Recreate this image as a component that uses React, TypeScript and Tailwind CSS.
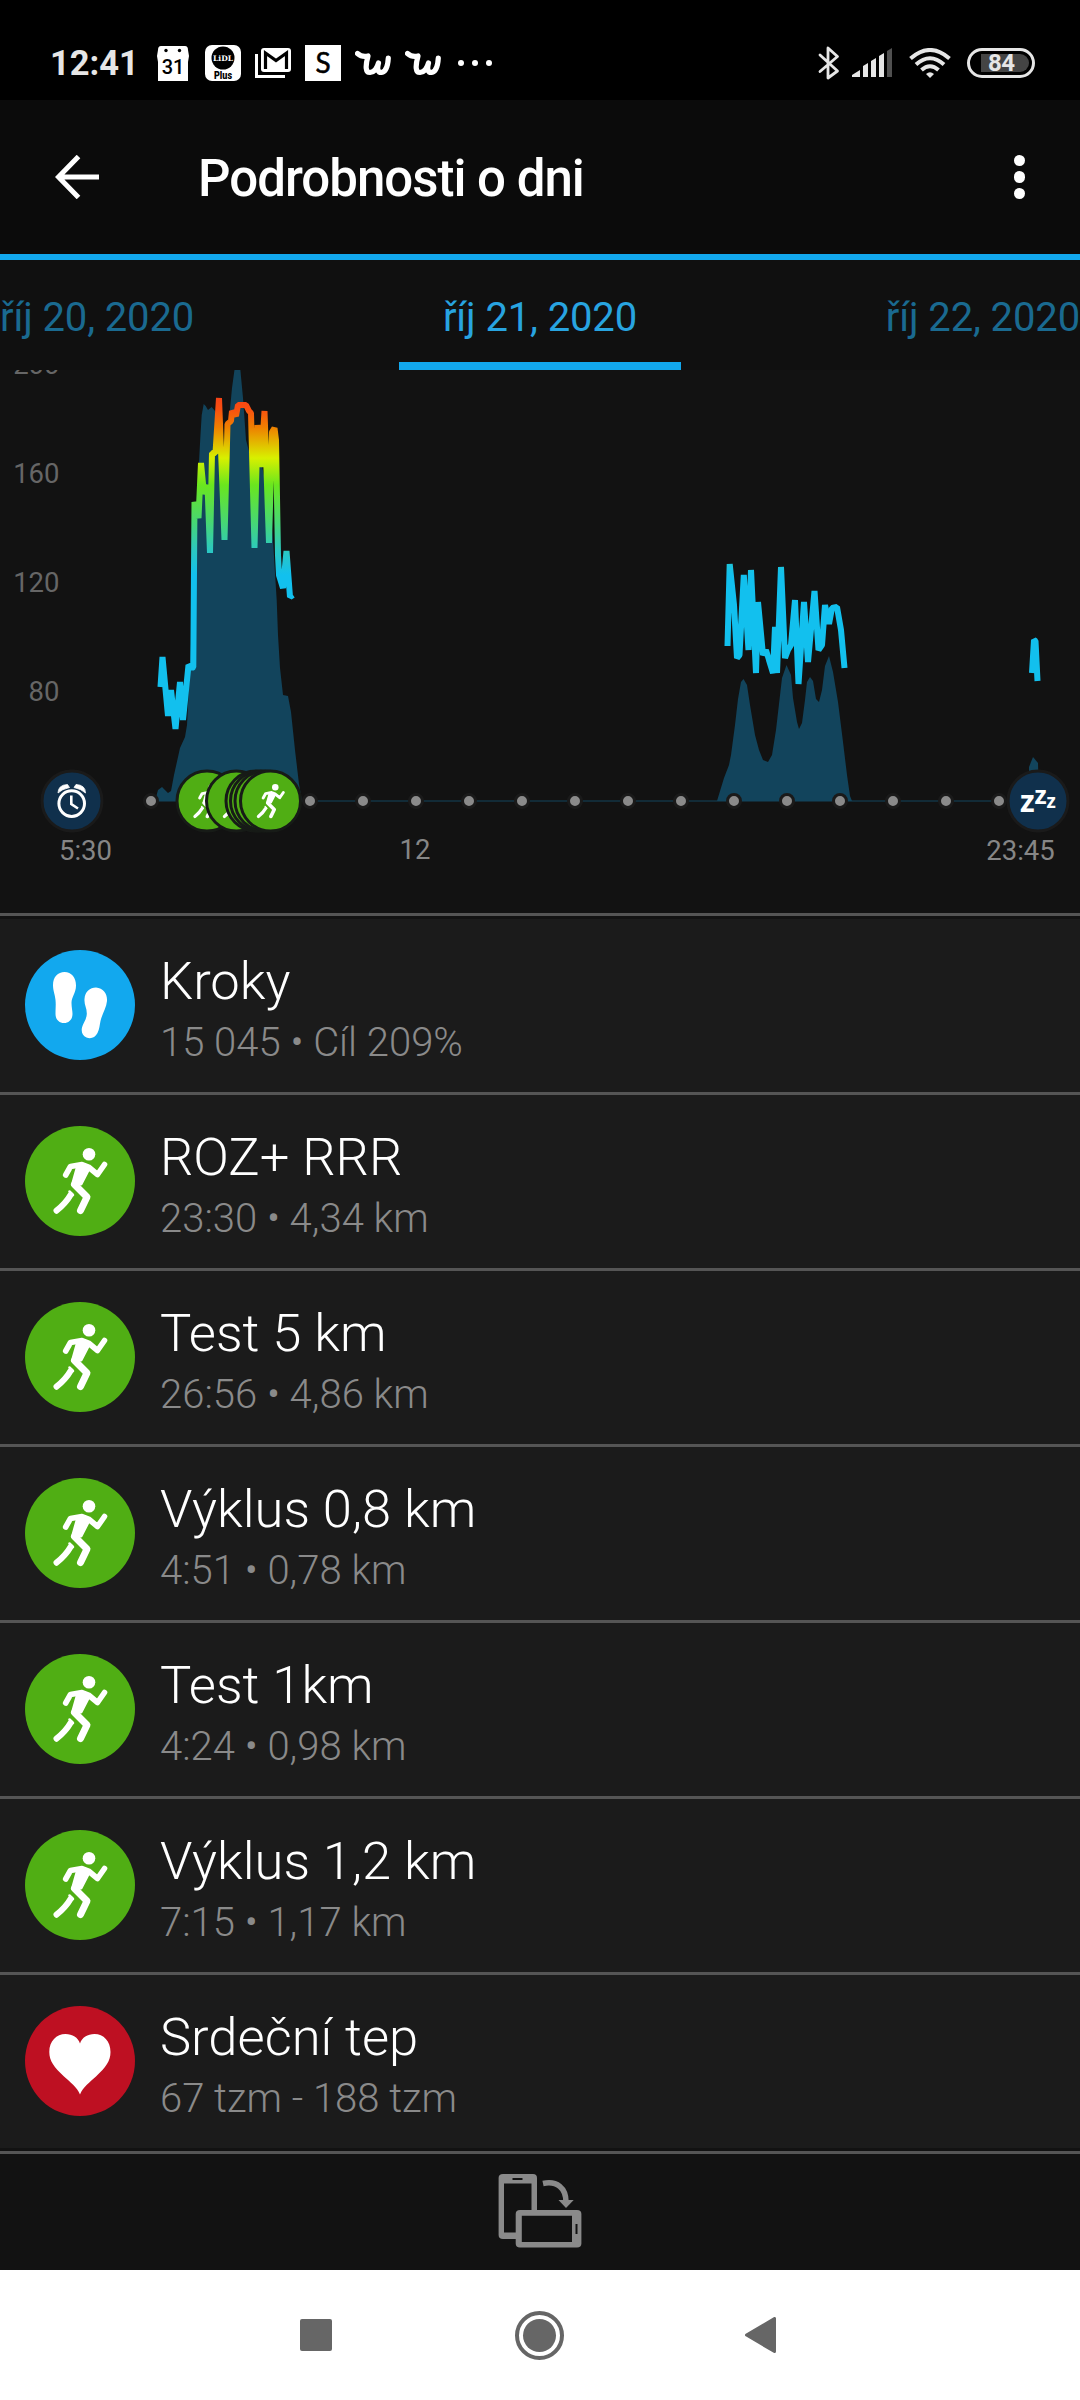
const ROWS = [
  { icon: "steps", title: "Kroky", detail: "15 045 • Cíl 209%" },
  { icon: "run", title: "ROZ+ RRR", detail: "23:30 • 4,34 km" },
  { icon: "run", title: "Test 5 km", detail: "26:56 • 4,86 km" },
  { icon: "run", title: "Výklus 0,8 km", detail: "4:51 • 0,78 km" },
  { icon: "run", title: "Test 1km", detail: "4:24 • 0,98 km" },
  { icon: "run", title: "Výklus 1,2 km", detail: "7:15 • 1,17 km" },
  { icon: "heart", title: "Srdeční tep", detail: "67 tzm - 188 tzm" },
];

// ------------------------------------------------------------
// Chart data (svg units = px)
// ------------------------------------------------------------
const HOUR_DOTS = Array.from({ length: 17 }, (_, i) => 151 + i * 53);
const RUN_MARKERS = [207, 236.5, 256, 260.5, 265, 270.5];
const Y_LABELS = [
  { value: 200, y: 374 },
  { value: 160, y: 482.5 },
  { value: 120, y: 591.5 },
  { value: 80, y: 700.5 },
];

const HEART_RATE = [
  "M160.500 687L162.500 657 168 716 171 690 175.500 729 180 682 183 720 188.500 665 192 668 193.300 667 194.500 502 198.500 518 201 463 204 494 207.500 485 210 553 212 453 215.500 453 219 398 224.500 540 227.500 424 231 421 232 411 236 416 238 405 246 405 249 411 251 413 254.500 548 257.500 425 261 467 264.500 411 269 543 272 432 274.500 428 276 440 278 555 279 575 283 588 286.500 551 290 597 293 595",
  "M727.500 646L729.700 564 734 605 737 658 739.500 655 743.800 575 748.500 650 751 570 756 673 758 602 763 655 766 650 769 660 773 673 775 627 777 673 781 567 785 658 788 650 791 645 795 600 798.500 684 804 602 808 662 814.500 591 818.500 650 822 645 825 605 829 624 832 608 837 607 841 630 844.500 668",
  "M1032 673L1034 640 1035.500 641 1037.500 681",
];

const ACTIVITY = [
  "M155 801L158 790 162 787 168 793 171 791 174 775 180 748 185 737 187 725 190 665 193 600 199 462 200.300 438 201.700 415 203.700 404 205.700 406 208 410 211.700 407 215 411 219 445 224 455 229 420 232 388 235 366 240 366 243 398 246 440 250 455 262 466 269 500 273 540 275 573 276.700 600 278 635 280 668 283 695 288 696 291 712 295 750 299 784 302 801Z",
  "M717 801L724 778 729 765 731 755 735 725 738 699 741 682 743.500 679 747 685 750 705 755 735 759 750 763 760 768 762 772 755 776 730 779 704 782 678 786.500 665 791 675 793 698 797 722 799 729 802 723 805 700 807 682 810 677 813 681 816 699 819 702 822 690 825 666 829 656 833 672 838 702 843 742 847 775 850 796 852 801Z",
  "M1029 801L1029 767 1033 757 1038 763 1039 801Z",
];

// 110x110 space, shared by list rows and the chart markers
function Runner() {
  return (
    <g fill="none" stroke="#fff" strokeLinecap="round" strokeLinejoin="round">
      <circle cx="64" cy="28.300" r="6.300" fill="#fff" stroke="none" />
      <path d="M40.700 49L45.500 40.500 57 38.500 63.500 41 72.500 48.500 79.500 38.500" strokeWidth="5.600" />
      <path d="M53 39L64 42.500 56 58 47.500 58.500Z" fill="#fff" strokeWidth="3" />
      <path d="M49.500 58.500L62 71 55.500 84.500" strokeWidth="7" />
      <path d="M45.500 69Q41 77 31.500 84.700" strokeWidth="6" />
      <path d="M44.500 65.500L48 69" strokeWidth="2.500" />
    </g>
  );
}

function RowIcon({ kind }: { kind: string }) {
  const color = kind === "steps" ? "#12a8ee" : kind === "run" ? "#50ae14" : "#be1022";
  return (
    <svg width="110" height="110" viewBox="0 0 110 110" className="mt-[31px] shrink-0">
      <circle cx="55" cy="55" r="55" fill={color} />
      {kind === "steps" && (
        <g fill="#fff">
          <path d="M39.500 22C46.500 22 51 27.500 51 35.500C51 43 46.500 47 46.500 53C46.500 57 47.500 61 47.500 64C47.500 69.500 44 73 39 73C34 73 30.500 69.500 30.500 64C30.500 58 31 55 30.500 50C30 44 28 41 28 35C28 27 33 22 39.500 22Z" />
          <path d="M71 37.500C78.500 38 82.500 44 82 51C81.500 58 77 64 75.500 71C74.500 75.500 74.500 79 72.500 83C70 88 65.500 89 61.500 87.500C57.500 86 56 82 57 77.500C58 73 61.500 70 61.800 64C62 58 59 55 59.500 49C60 41.500 65 37.500 71 37.500Z" />
        </g>
      )}
      {kind === "run" && <Runner />}
      {kind === "heart" && (
        <path d="M55 88.500C52 81 45 76 39 70.500C29 61 24.300 55 24.300 46C24.300 35 31.500 28 40.500 28C47.500 28 53 31.500 55 37.500C57 31.500 62.500 28 69.500 28C78.500 28 85.500 35 85.500 46C85.500 55 81 61 71 70.500C65 76 58 81 55 88.500Z" fill="#fff" />
      )}
    </svg>
  );
}

function WishIcon() {
  return (
    <svg width="36" height="26" viewBox="0 0 36 26" fill="none" stroke="#fff" strokeWidth="5.200" strokeLinecap="round" strokeLinejoin="round">
      <path d="M2.500 3.500Q7 7.500 13 6Q8.500 22.500 15 22.500Q21 22 23.500 13Q21 22.500 26.500 22.500Q32.500 21.500 33.300 8" />
    </svg>
  );
}

function StatusBar() {
  return (
    <div className="flex h-[100px] items-center bg-black pt-[26px]">
      <span className="ml-[50px] w-[107px] text-[34.500px]/[34px] font-bold text-[#e6e6e6]">12:41</span>
      <svg width="32" height="35" viewBox="0 0 32 35">
        <path d="M4 0H28Q31 0 31 4L32 10 31 16V35H1V16L0 10 1 4Q1 0 4 0Z" fill="#fff" />
        <circle cx="9" cy="4.500" r="1.700" />
        <circle cx="22.500" cy="4.500" r="1.700" />
        <text x="16" y="27.500" textAnchor="middle" fontSize="20" fontWeight="500">31</text>
      </svg>
      <svg width="36" height="36" viewBox="0 0 36 36" className="ml-4">
        <rect width="36" height="36" rx="7" fill="#fff" />
        <circle cx="18" cy="13" r="11.500" />
        <text x="18" y="15.500" textAnchor="middle" fontSize="7.500" fontWeight="700" fill="#fff" fontFamily="DejaVu Serif" textLength="20" lengthAdjust="spacingAndGlyphs">LiDL</text>
        <text x="18" y="33.500" textAnchor="middle" fontSize="10.500" fontWeight="900" textLength="18" lengthAdjust="spacingAndGlyphs">Plus</text>
      </svg>
      <svg width="36" height="30" viewBox="0 0 36 30" className="ml-[14px]">
        <path d="M1.500 6V28.500H30" fill="none" stroke="#fff" strokeWidth="3" />
        <rect x="6" width="30" height="24" rx="3" fill="#fff" />
        <path d="M10.500 21V5L21 12.500 31.500 5V21" fill="none" stroke="#000" strokeWidth="3.200" />
      </svg>
      <svg width="36" height="36" viewBox="0 0 36 36" className="ml-[14px]">
        <rect width="36" height="36" fill="#fff" />
        <text x="18" y="28" textAnchor="middle" fontSize="28" fontFamily="Lato" stroke="#000" strokeWidth="0.500">S</text>
      </svg>
      <div className="ml-[14px] flex gap-[14px]">
        <WishIcon />
        <WishIcon />
      </div>
      <div className="ml-[17px] flex gap-2">
        {[0, 1, 2].map((i) => (
          <div key={i} className="size-[6px] rounded-full bg-white" />
        ))}
      </div>
      <svg width="22" height="34" viewBox="0 0 22 34" className="ml-auto" fill="none" stroke="#e6e6e6" strokeWidth="2.800" strokeLinejoin="round" strokeLinecap="round">
        <path d="M2 9L19.500 25 10 32V2L19.500 10.500 2 25.500" />
      </svg>
      <svg width="40" height="30" viewBox="0 0 40 30" className="mr-px ml-3" fill="#e6e6e6">
        <path d="M0 29V27L8 22V29ZM11 18L16 15V29H11ZM19 13L24 10V29H19ZM27 8L32 5V29H27Z" />
        <path d="M35 3L40 0V29H35Z" fill="#505050" />
      </svg>
      <svg width="42" height="30" viewBox="0 0 42 30" className="ml-4" fill="none" stroke="#e6e6e6" strokeWidth="4">
        <path d="M1.500 10.500Q21-6.500 40.500 10.500M7 16.500Q21 4 35 16.500M12.500 22Q21 14.500 29.500 22" />
        <path d="M17 26Q21 22.500 25 26L21 30Z" fill="#e6e6e6" stroke="none" />
      </svg>
      <div className="mr-[45px] ml-4 flex h-[30px] w-[68px] items-center rounded-full border-3 border-[#e6e6e6] pl-[11px]">
        <div className="flex h-[18px] w-12 items-center rounded-r-full bg-[#444] pl-[7px] text-[24px]/[18px] font-bold tracking-[-0.500px] text-[#e6e6e6]">84</div>
      </div>
    </div>
  );
}

function DayChart() {
  return (
    <svg width="1080" height="543" viewBox="0 370 1080 543" className="block bg-[#121212]">
      <defs>
        <linearGradient id="zones" gradientUnits="userSpaceOnUse" x1="0" y1="395" x2="0" y2="575">
          <stop offset="0" stopColor="#f54018" />
          <stop offset="0.080" stopColor="#f85010" />
          <stop offset="0.180" stopColor="#ee8000" />
          <stop offset="0.350" stopColor="#d8f000" />
          <stop offset="0.500" stopColor="#6ae61e" />
          <stop offset="0.700" stopColor="#48d870" />
          <stop offset="0.860" stopColor="#2cc8c0" />
          <stop offset="1" stopColor="#12c0ee" />
        </linearGradient>
      </defs>

      {Y_LABELS.map((l) => (
        <text key={l.value} x="59.500" y={l.y} textAnchor="end" fontSize="27.500" fill="#666">{l.value}</text>
      ))}

      {ACTIVITY.map((d) => <path key={d} d={d} fill="#12445c" />)}
      <rect x="151" y="800.500" width="880" height="1" fill="#12445c" />
      {HEART_RATE.map((d) => (
        <path key={d} d={d} fill="none" stroke="url(#zones)" strokeWidth="6" strokeLinejoin="bevel" />
      ))}

      {HOUR_DOTS.map((x) => (
        <circle key={x} cx={x} cy="801" r="6.500" fill="#8a8a8a" stroke="#1a1a1a" strokeWidth="3" />
      ))}

      {/* wake up */}
      <circle cx="72" cy="801" r="30" fill="#10304c" stroke="#1a1a1a" strokeWidth="3" />
      <g fill="none" stroke="#fff">
        <circle cx="71.700" cy="803.600" r="12.800" strokeWidth="3" />
        <path d="M71.300 795.500V804L78 808.500" strokeWidth="2.600" />
        <path d="M58 793Q58 785 67.500 784.500L69.500 787.500Q62 789 58 793ZM85.500 793Q85.500 785 76 784.500L74 787.500Q81.500 789 85.500 793Z" fill="#fff" strokeWidth="0.800" strokeLinejoin="round" />
      </g>

      {RUN_MARKERS.map((x) => (
        <g key={x}>
          <circle cx={x} cy="801" r="30" fill="#50ae14" stroke="#171b17" strokeWidth="3" />
          <g transform={`translate(${x - 28.5} 772.500) scale(0.520)`}>
            <Runner />
          </g>
        </g>
      ))}

      {/* bed time */}
      <circle cx="1038" cy="801" r="30" fill="#10304c" stroke="#1a1a1a" strokeWidth="3" />
      <g fill="#fff" fontFamily="Open Sans" fontWeight="700">
        <text x="1020" y="811.500" fontSize="30">z</text>
        <text x="1034.500" y="803.500" fontSize="25">z</text>
        <text x="1046.500" y="807.500" fontSize="19">z</text>
      </g>

      <g fontSize="27.500" fill="#868686" textAnchor="middle">
        <text x="85.500" y="860">5:30</text>
        <text x="415" y="858.500">12</text>
        <text x="1020.500" y="860">23:45</text>
      </g>
    </svg>
  );
}

export default function App() {
  return (
    <div className="h-[2400px] w-[1080px] overflow-hidden bg-[#121212] font-[Roboto,sans-serif]">
      <StatusBar />

      <header className="flex h-[160px] items-center border-b-6 border-[#12a8ee] bg-[#0b0b0b] text-white">
        <svg width="44" height="44" viewBox="0 0 44 44" className="ml-[55px]" fill="none" stroke="#fff" strokeWidth="5">
          <path d="M44 22H4M23.500 1.500L3.500 22 23.500 42.500" />
        </svg>
        <h1 className="ml-[99px] pt-[5px] text-[51px] font-medium tracking-[-1px]">Podrobnosti o dni</h1>
        <div className="mr-[55px] ml-auto flex flex-col gap-[5px]">
          {[0, 1, 2].map((i) => (
            <div key={i} className="size-[11.500px] rounded-full bg-white" />
          ))}
        </div>
      </header>

      <nav className="flex h-[110px] justify-between overflow-hidden bg-[#101010] text-[40px]/[110px] tracking-[-0.120px] whitespace-nowrap text-[#1a6a90]">
        <span className="w-[282px] pt-[3px]">říj 20, 2020</span>
        <span className="w-[282px] border-b-8 border-[#12a8ee] pt-[3px] text-center text-[#28a4e0]">říj 21, 2020</span>
        <span className="w-[282px] pt-[3px] text-right">říj 22, 2020</span>
      </nav>

      <DayChart />

      <main className="border-y-3 border-[#555] py-[3px]">
        {ROWS.map((row, i) => (
          <div key={row.title} className={`flex bg-[#1b1b1b] pl-[25px] ${i < ROWS.length - 1 ? "h-[176px] border-b-3 border-[#555]" : "h-[173px]"}`}>
            <RowIcon kind={row.icon} />
            <div className="ml-[25px] pt-8 font-light">
              <p className="text-[52.500px]/[60px] text-white">{row.title}</p>
              <p className="mt-1 text-[40px]/[56px] text-[#8a8a8a]">{row.detail}</p>
            </div>
          </div>
        ))}
      </main>

      {/* rotate device hint */}
      <div className="flex h-[116px] justify-center pt-5">
        <svg width="84" height="74" viewBox="0 0 84 74" fill="#8a8a8a">
          <path fillRule="evenodd" d="M5 0H35Q39 0 39 4V36H33.500V9.500H6V58.500H18V65H5Q.6 65 .6 61V4Q.6 0 5 0ZM14.500 4V6H24.500V4Z" />
          <path fillRule="evenodd" d="M22 36H79Q83.400 36 83.400 40V69.500Q83.400 73.500 79 73.500H22Q17.700 73.500 17.700 69.500V40Q17.700 36 22 36ZM23.800 41.700V68H74V41.700ZM77.500 50V60H79.500V50Z" />
          <path d="M45 9.500C59 6.500 68 14 68 28" fill="none" stroke="#8a8a8a" strokeWidth="5.600" />
          <path d="M60.500 26H75.700L68 34Z" />
        </svg>
      </div>

      <footer className="flex h-[130px] items-center bg-white">
        <div className="ml-[300px] size-8 rounded-[2px] bg-[#666]" />
        <svg width="50" height="50" viewBox="0 0 50 50" className="ml-[182px]" fill="#666">
          <circle cx="25.500" cy="25.500" r="22.500" fill="none" stroke="#666" strokeWidth="4" />
          <circle cx="25.500" cy="25.500" r="16.500" />
        </svg>
        <svg width="31" height="36" viewBox="0 0 31 36" className="ml-[181px]" fill="#666" stroke="#666" strokeWidth="3" strokeLinejoin="round">
          <path d="M1.500 18L29.500 1.500V34.500Z" />
        </svg>
      </footer>
    </div>
  );
}
